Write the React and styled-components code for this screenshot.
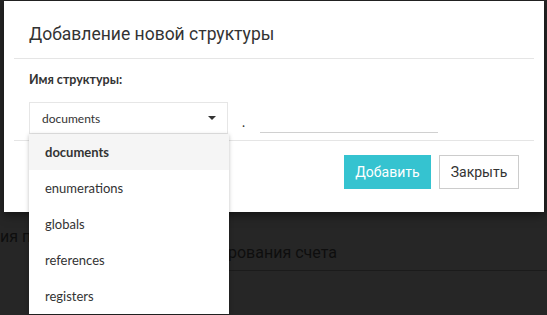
import React from "react";
import styled, { createGlobalStyle } from "styled-components";

const GlobalStyle = createGlobalStyle`
  html, body {
    margin: 0;
    padding: 0;
    background: #262626;
    font-family: Lato, "Open Sans", sans-serif;
  }
`;

const Page = styled.div`
  position: relative;
  width: 547px;
  height: 315px;
  overflow: hidden;
  background: #262626;
`;

const Behind = styled.div`
  padding-top: 227px;
  color: #0e0e0e;
  font-family: Roboto, "Noto Sans", sans-serif;
  font-size: 16px;
`;

const BehindLeft = styled.div`
  line-height: 20px;
`;

const BehindRow = styled.div`
  margin-left: 228px;
  margin-top: -9px;
  height: 32px;
  line-height: 30px;
  border-bottom: 1px solid #1b1b1b;
`;

const Modal = styled.div`
  position: absolute;
  left: 4px;
  top: 1px;
  width: 540px;
  height: 211px;
  background: #fff;
  box-shadow: 0 3px 9px rgba(0, 0, 0, 0.5);
`;

const Header = styled.div`
  height: 57px;
  margin: 0 10px;
  padding-left: 15px;
  display: flex;
  align-items: center;
  border-bottom: 1px solid #e5e5e5;
`;

const Title = styled.h4`
  margin: 0;
  padding-top: 8px;
  font-family: Roboto, "Noto Sans", sans-serif;
  font-weight: 400;
  font-size: 17.5px;
  color: #333;
`;

const Body = styled.div`
  margin: 0 10px;
  padding: 13px 15px 0;
  height: 68px;
  border-bottom: 1px solid #e5e5e5;
`;

const Label = styled.div`
  font-size: 12.5px;
  font-weight: 700;
  color: #333;
  line-height: 16px;
`;

const FieldRow = styled.div`
  display: flex;
  align-items: flex-start;
  margin-top: 14px;
`;

const SelectWrap = styled.div`
  position: relative;
`;

const SelectBox = styled.div`
  width: 199px;
  height: 32px;
  box-sizing: border-box;
  border: 1px solid #e6e6e6;
  display: flex;
  align-items: center;
  justify-content: space-between;
  padding: 0 11px 0 12px;
  font-size: 12px;
  color: #333;
`;

const Caret = styled.span`
  width: 0;
  height: 0;
  border-left: 4px solid transparent;
  border-right: 4px solid transparent;
  border-top: 4px solid #333;
`;

const Dot = styled.span`
  margin: 12px 0 0 14px;
  font-size: 13px;
  color: #333;
`;

const TextInput = styled.input`
  margin-left: 15px;
  width: 178px;
  height: 31px;
  box-sizing: border-box;
  border: none;
  border-bottom: 1px solid #d0d0d0;
  outline: none;
  background: transparent;
`;

const Footer = styled.div`
  display: flex;
  justify-content: flex-end;
  gap: 8px;
  padding: 14px 25px 0 0;
`;

const Button = styled.button`
  box-sizing: border-box;
  height: 34px;
  width: ${(p) => (p.primary ? "87px" : "80px")};
  padding: 0;
  font-family: Roboto, "Noto Sans", sans-serif;
  font-size: 14px;
  border: 1px solid ${(p) => (p.primary ? "#35c3d0" : "#ccc")};
  background: ${(p) => (p.primary ? "#35c3d0" : "#fff")};
  color: ${(p) => (p.primary ? "#fff" : "#333")};
`;

const Menu = styled.ul`
  position: absolute;
  left: 0;
  top: 32px;
  width: 200px;
  margin: 0;
  padding: 0;
  list-style: none;
  background: #fff;
  box-shadow: 0 1px 4px rgba(0, 0, 0, 0.25);
  z-index: 2;
`;

const MenuItem = styled.li`
  height: 36px;
  line-height: 36px;
  padding-left: 16px;
  font-size: 13px;
  color: #333;
  font-weight: ${(p) => (p.active ? 700 : 400)};
  background: ${(p) => (p.active ? "#f5f5f5" : "#fff")};
`;

const items = ["documents", "enumerations", "globals", "references", "registers"];

export default function App() {
  return (
    <Page>
      <GlobalStyle />
      <Behind>
        <BehindLeft>ия по</BehindLeft>
        <BehindRow>рования счета</BehindRow>
      </Behind>
      <Modal>
        <Header>
          <Title>Добавление новой структуры</Title>
        </Header>
        <Body>
          <Label>Имя структуры:</Label>
          <FieldRow>
            <SelectWrap>
              <SelectBox>
                documents
                <Caret />
              </SelectBox>
              <Menu>
                {items.map((it, i) => (
                  <MenuItem key={it} active={i === 0}>
                    {it}
                  </MenuItem>
                ))}
              </Menu>
            </SelectWrap>
            <Dot>.</Dot>
            <TextInput />
          </FieldRow>
        </Body>
        <Footer>
          <Button primary>Добавить</Button>
          <Button>Закрыть</Button>
        </Footer>
      </Modal>
    </Page>
  );
}
